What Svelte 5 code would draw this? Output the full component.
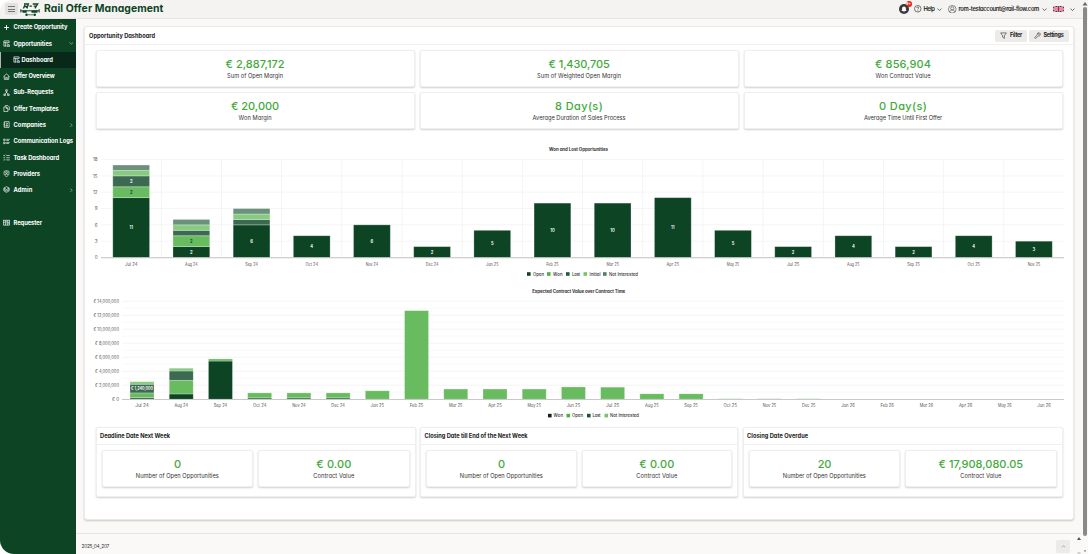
<script>
  const nav = [
    { icon: 'plus', label: 'Create Opportunity', w: 54 },
    { icon: 'board', label: 'Opportunities', w: 38.5, chevron: 'down' },
    { icon: 'board', label: 'Dashboard', w: 31.5, active: true },
    { icon: 'home', label: 'Offer Overview', w: 41 },
    { icon: 'tree', label: 'Sub-Requests', w: 40 },
    { icon: 'copy', label: 'Offer Templates', w: 45 },
    { icon: 'book', label: 'Companies', w: 32.5, chevron: 'right' },
    { icon: 'logs', label: 'Communication Logs', w: 59.5 },
    { icon: 'tasks', label: 'Task Dashboard', w: 45.5 },
    { icon: 'shield', label: 'Providers', w: 26.5 },
    { icon: 'layers', label: 'Admin', w: 19, chevron: 'right' },
    null,
    { icon: 'request', label: 'Requester', w: 28.5 }
  ];

  const stats = [
    { value: '€ 2,887,172', w: 59, label: 'Sum of Open Margin', lw: 56 },
    { value: '€ 1,430,705', w: 61, label: 'Sum of Weighted Open Margin', lw: 84 },
    { value: '€ 856,904', w: 56, label: 'Won Contract Value', lw: 55 },
    { value: '€ 20,000', w: 48, label: 'Won Margin', lw: 33 },
    { value: '8 Day(s)', w: 48, label: 'Average Duration of Sales Process', lw: 93 },
    { value: '0 Day(s)', w: 48, label: 'Average Time Until First Offer', lw: 78 }
  ];

  const panels = [
    { title: 'Deadline Date Next Week', w: 70, count: '0', cw: 6.5, value: '€ 0.00', vw: 35 },
    { title: 'Closing Date till End of the Next Week', w: 103, count: '0', cw: 6.5, value: '€ 0.00', vw: 35 },
    { title: 'Closing Date Overdue', w: 61, count: '20', cw: 13, value: '€ 17,908,080.05', vw: 84.5 }
  ];

  const DARK = '#0d4424', GREEN = '#68bc5f', MID = '#3c6a50', LIGHT = '#86cb7f', GREY = '#6b907c';

  const opp = [
    ['Jul 24', [11, 2, 2, 1, 1]], ['Aug 24', [2, 2, 1, 1, 1]], ['Sep 24', [6, 0, 1, 1, 1]],
    ['Oct 24', [4]], ['Nov 24', [6]], ['Dec 24', [2]], ['Jan 25', [5]], ['Feb 25', [10]],
    ['Mar 25', [10]], ['Apr 25', [11]], ['May 25', [5]], ['Jul 25', [2]], ['Aug 25', [4]],
    ['Sep 25', [2]], ['Oct 25', [4]], ['Nov 25', [3]]
  ];
  const oppColors = [DARK, GREEN, MID, LIGHT, GREY];

  // Segments run bottom to top as [color, millions].
  const contract = [
    ['Jul 24', [[MID, 0.25], [GREEN, 0.65], [MID, 1.24], [LIGHT, 0.36]]],
    ['Aug 24', [[DARK, 0.75], [GREEN, 1.95], [MID, 1.33], [LIGHT, 0.4]]],
    ['Sep 24', [[DARK, 5.45], [GREEN, 0.3]]],
    ['Oct 24', [[MID, 0.2], [GREEN, 0.7]]], ['Nov 24', [[MID, 0.2], [GREEN, 0.7]]],
    ['Dec 24', [[MID, 0.2], [GREEN, 0.7]]], ['Jan 25', [[GREEN, 1.2]]],
    ['Feb 25', [[GREEN, 12.65]]], ['Mar 25', [[GREEN, 1.45]]], ['Apr 25', [[GREEN, 1.45]]],
    ['May 25', [[GREEN, 1.45]]], ['Jun 25', [[GREEN, 1.75]]], ['Jul 25', [[GREEN, 1.72]]],
    ['Aug 25', [[GREEN, 0.77]]], ['Sep 25', [[GREEN, 0.77]]],
    ['Oct 25', [['#c5e5c2', 0.12]]], ['Nov 25', [['#c5e5c2', 0.12]]], ['Dec 25', [['#c5e5c2', 0.12]]],
    ['Jan 26', []], ['Feb 26', []], ['Mar 26', []], ['Apr 26', []], ['May 26', []], ['Jun 26', []]
  ];

  function stack(list, unit, base) {
    let y = base;
    return list.filter(([, v]) => v > 0).map(([color, v]) => {
      y -= v * unit;
      return { color, v, y, h: v * unit };
    });
  }

  const bars1 = opp.map(([label, vals], i) => ({
    label, x: 101.1 + 60.18 * (i + 0.5),
    segs: stack(vals.map((v, k) => [oppColors[k], v]), 5.44, 257.5)
  }));
  const bars2 = contract.map(([label, vals], i) => ({
    label, x: 122.4 + 39.22 * (i + 0.5), segs: stack(vals, 7, 399.2)
  }));
  const money = (n) => (n === 0 ? '€ 0' : `€ ${n},000,000`);

  const legend1 = [
    { x: 527, c: DARK, t: 'Open', w: 11 }, { x: 547, c: '#4fae46', t: 'Won', w: 9.5 },
    { x: 566, c: '#245a3b', t: 'Lost', w: 8 }, { x: 583.5, c: '#75c46c', t: 'Initial', w: 11 },
    { x: 603, c: '#527e67', t: 'Not Interested', w: 29 }
  ];
  const legend2 = [
    { x: 548, c: '#08291a', t: 'Won', w: 9.5 }, { x: 566.5, c: '#4fae46', t: 'Open', w: 11 },
    { x: 587, c: '#1d5436', t: 'Lost', w: 8 }, { x: 604.5, c: '#75c46c', t: 'Not Interested', w: 29 }
  ];

  // Tracks a single-line label so that it fills the width it is given.
  function fit(node, width) {
    const apply = () => {
      node.style.letterSpacing = '0px';
      const gap = (width - node.getBoundingClientRect().width) / node.textContent.length;
      node.style.letterSpacing = `${gap}px`;
    };
    apply();
    document.fonts.ready.then(apply);
  }
</script>

{#snippet icon(name)}
  <svg class="ico" viewBox="0 0 16 16" fill="none" stroke="currentColor" stroke-width="1.5">
    {#if name === 'plus'}
      <path d="M8 2.5v11M2.5 8h11" stroke-width="2.2" />
    {:else if name === 'board'}
      <path d="M14 6V2H2v12h5M2 5.5h12M5.5 5.5V14M8 8.5h3M9 14.5h6v-3H9zM12 11.5V9" />
    {:else if name === 'home'}
      <path d="M1 8.5 8 2l7 6.5M3 7v7.5h10V7M6.3 14v-4h3.4v4" />
    {:else if name === 'tree'}
      <path d="M6.3 1.5h3.4v4H6.3zM8 5.5V9M4 11.5 8 8l4 3.500M2 11.500h3.500V15H2zM10.500 11.500H14V15h-3.500z" />
    {:else if name === 'copy'}
      <path d="M5 4V1.500h6.500L14.500 4.500V11H12M2 4.500h6L11 7.500V15H2zM7.500 4.500V8H11" />
    {:else if name === 'book'}
      <path d="M3 1.500h11v13H3zM1.500 4.500H4M1.500 8H4M1.500 11.500H4M6.500 11.500c0-3 4.500-3 4.500 0z" /><circle cx="8.750" cy="6" r="1.500" />
    {:else if name === 'logs'}
      <path d="M1.500 2.500h3.500v3H1.500zM1.500 9.500h3.500v3.500H1.500zM7.500 3h8M7.500 5.500h6M7.500 10h8M7.500 12.500h6" />
    {:else if name === 'tasks'}
      <path d="m1 3 1.500 1.500L5 1.500M1 8l1.500 1.500L5 6.500M1 13l1.500 1.500L5 11.500M7.500 3.500h8M7.500 8.500h8M7.500 13.500h8" />
    {:else if name === 'shield'}
      <path d="M2.500 3 8 1.500 13.500 3v5.500c0 3-2.500 5-5.500 6.500-3-1.500-5.500-3.500-5.500-6.500z" /><circle cx="8" cy="6" r="2" /><path d="M4.500 11.500c1-3 6-3 7 0" />
    {:else if name === 'layers'}
      <path d="m8 1.500 6 3.200-6 3.300-6-3.300zM2 8l6 3.300L14 8M2 11.200l6 3.300 6-3.300M2 4.700v6.500M14 4.700v6.500" />
    {:else if name === 'request'}
      <path d="M0 3h16M1 3v11h14V3M5.500 3v11M10.500 3v11M1 7.500h4.500M10.500 7.500H15M7 6h2M7 9h2M12 10.500h2" />
    {/if}
  </svg>
{/snippet}

{#snippet chevron(dir)}
  <svg class="chev" viewBox="0 0 8 8" fill="none" stroke="currentColor">
    {#if dir === 'right'}<path d="m2.500 1 3 3-3 3" />{:else if dir === 'up'}<path d="m1.200 5.200 2.800-2.500 2.800 2.500" />{:else}<path d="m.8 2.600 3.200 3 3.200-3" />{/if}
  </svg>
{/snippet}

<div class="window">
  <header>
    <button class="burger" aria-label="Menu"><i></i><i></i><i></i></button>
    <svg class="logo" viewBox="0 0 20 14" fill="none" stroke="#0d4424">
      <path d="M4 1h4.400L7.600 3.500H4.600M4.900 2 3.400 5.400M6 3.500l1.600 1.900M9.500 3.200h2.400M12.700 1h5L14.900 5.400M13.600 3.200h3.200" stroke-width="1.300" />
      <path d="M.8 6.200v3.300M19.200 6.200v3.300M1 7.800h18" stroke-width="1" />
      <path d="M2.500 7.400h4.200v2.400H2.500zM11.500 7.400h6v2.400h-6z" fill="#0d4424" stroke="none" />
      <circle cx="6.500" cy="11.800" r="1.200" fill="#0d4424" stroke="none" /><circle cx="14.800" cy="11.800" r="1.200" fill="#0d4424" stroke="none" />
      <path d="M6 11.800h9" stroke-width=".7" />
    </svg>
    <h1><span use:fit={119.5}>Rail Offer Management</span></h1>
    <div class="tools">
      <div class="bell">
        <svg viewBox="0 0 10 10"><circle cx="5" cy="5" r="5" fill="#37393c" /><path d="M2.500 7h5L6.900 5.800V4.300a1.900 1.900 0 0 0-3.800 0v1.500zM4.200 7.400h1.600a.8.800 0 0 1-1.600 0z" fill="#fff" /></svg>
        <b>9+</b>
      </div>
      <svg class="round" viewBox="0 0 16 16" fill="none" stroke="#333" stroke-width="1.400"><circle cx="8" cy="8" r="7" /><path d="M5.900 6.200c0-2.800 4.200-2.600 4.200 0 0 1.700-2.100 1.600-2.100 3.200M8 11v1.400" /></svg>
      <span use:fit={11}>Help</span>
      {@render chevron('down')}
      <svg class="round user" viewBox="0 0 16 16" fill="none" stroke="#444" stroke-width="1.100"><circle cx="8" cy="8" r="7.200" /><circle cx="8" cy="6.300" r="3" /><path d="M3 13c1-3 2.500-3.700 5-3.700s4 .7 5 3.700" /></svg>
      <span use:fit={80.5}>rom-testaccount@rail-flow.com</span>
      {@render chevron('down')}
      <svg class="flag" viewBox="0 0 22 12"><path fill="#29337e" d="M0 0h22v12H0z" /><path stroke="#fff" stroke-width="2.600" d="m0 0 22 12M22 0 0 12" /><path stroke="#d22" stroke-width="1" d="m0 0 22 12M22 0 0 12" /><path stroke="#fff" stroke-width="4" d="M11 0v12M0 6h22" /><path stroke="#d3172f" stroke-width="2.400" d="M11 0v12M0 6h22" /></svg>
      {@render chevron('down')}
    </div>
  </header>

  <div class="body">
    <nav>
      {#each nav as item}
        {#if item}
          <a class:active={item.active}>
            {@render icon(item.icon)}
            <span use:fit={item.w}>{item.label}</span>
            {#if item.chevron}<em>{@render chevron(item.chevron)}</em>{/if}
          </a>
        {:else}
          <div class="gap"></div>
        {/if}
      {/each}
    </nav>

    <main>
      <section class="dash">
        <div class="head">
          <h2><span use:fit={66}>Opportunity Dashboard</span></h2>
          <button class="filter"><svg viewBox="0 0 16 16" fill="none" stroke="#333" stroke-width="1.400"><path d="M1.500 2h13L10 8.500v6L6 12V8.500z" /></svg><span use:fit={12}>Filter</span></button>
          <button class="settings"><svg viewBox="0 0 16 16" fill="none" stroke="#333" stroke-width="1.400"><path d="M13.800 3.500 11.500 5.800 10 4.500l2.300-2.500C9.500.8 6.500 3 7.500 6.500L2 12c-1.200 1.500.8 3.500 2.300 2.300L9.800 8.800c3.500 1 5.700-2.300 4-5.300z" /></svg><span use:fit={20}>Settings</span></button>
        </div>

        <div class="stats">
          {#each stats as s}
            <div class="card">
              <strong><span use:fit={s.w}>{s.value}</span></strong>
              <small><span use:fit={s.lw}>{s.label}</span></small>
            </div>
          {/each}
        </div>

        <svg class="chart" viewBox="86 140 984 287">
          <text class="title" x="578.500" y="150.900" textLength="59">Won and Lost Opportunities</text>
          {#each [0, 3, 6, 9, 12, 15, 18] as n}
            <path d="M101 {257.5 - n * 5.44}H1064" stroke={n ? '#f4f5f5' : '#cfcfcf'} />
            <text class="axis end" x="97.500" y={259.2 - n * 5.44}>{n}</text>
          {/each}
          {#each bars1 as b, i}
            {#if i}<path d="M{b.x - 30.09} 159.500V257" stroke="#f3f4f5" />{/if}
            {#each b.segs as s}
              <rect x={b.x - 18.4} y={s.y} width="36.800" height={s.h} fill={s.color} stroke="#fff" stroke-opacity=".35" stroke-width=".8" />
              {#if s.v > 1}<text class="val" class:dark={s.color === GREEN} x={b.x} y={s.y + s.h / 2 + 1.5}>{s.v}</text>{/if}
            {/each}
            <text class="axis" x={b.x} y="265.700" textLength="12.500" lengthAdjust="spacingAndGlyphs">{b.label}</text>
          {/each}
          <path d="M101 257.900H1064" stroke="#cfcfcf" stroke-width=".8" />
          {#each legend1 as l}
            <rect x={l.x} y="272.200" width="3.600" height="3.600" fill={l.c} />
            <text class="leg" x={l.x + 6} y="275.700" textLength={l.w}>{l.t}</text>
          {/each}

          <text class="title" x="578.700" y="292.700" textLength="93">Expected Contract Value over Contract Time</text>
          {#each Array(14) as _, i}
            <path d="M122 {392.2 - i * 7}H1064" stroke={i % 2 ? '#f3f4f4' : '#f9f9f9'} />
          {/each}
          {#each [0, 2, 4, 6, 8, 10, 12, 14] as n}
            <text class="axis end" x="119" y={400.900 - n * 7} textLength={n === 0 ? 7 : n < 10 ? 24 : 25.500} lengthAdjust="spacingAndGlyphs">{money(n)}</text>
          {/each}
          {#each bars2 as b}
            {#each b.segs as s}
              <rect x={b.x - 12} y={s.y} width="24" height={s.h} fill={s.color} stroke="#fff" stroke-opacity=".35" stroke-width=".7" />
              {#if s.v === 1.24}<text class="val" x={b.x} y={s.y + s.h / 2 + 1.5} textLength="22" lengthAdjust="spacingAndGlyphs">€ 1,240,000</text>{/if}
            {/each}
            <text class="axis" x={b.x} y="407.200" textLength="13.500" lengthAdjust="spacingAndGlyphs">{b.label}</text>
          {/each}
          <path d="M122 399.500H1064" stroke="#c8c8c8" />
          {#each legend2 as l}
            <rect x={l.x} y="413.800" width="3.600" height="3.600" fill={l.c} />
            <text class="leg" x={l.x + 5.500} y="417.200" textLength={l.w}>{l.t}</text>
          {/each}
        </svg>

        <div class="panels">
          {#each panels as p}
            <div class="panel">
              <h3><span use:fit={p.w}>{p.title}</span></h3>
              <div class="pair">
                <div class="card"><strong><span use:fit={p.cw}>{p.count}</span></strong><small><span use:fit={83}>Number of Open Opportunities</span></small></div>
                <div class="card"><strong><span use:fit={p.vw}>{p.value}</span></strong><small><span use:fit={41}>Contract Value</span></small></div>
              </div>
            </div>
          {/each}
        </div>
      </section>

      <footer>
        <span use:fit={27.5}>2025_04_207</span>
        <button aria-label="Back to top">{@render chevron('up')}</button>
      </footer>
    </main>

    <div class="scroll">
      <i class="thumb"></i>
      <svg class="up" viewBox="0 0 6 4"><path d="M3 0 5.500 3.500h-5z" fill="#666" /></svg>
      <svg class="low" viewBox="0 0 12 18"><path d="m4 1 2 3H2zM10 16l-1.200-1.500h2.400z" fill="#555" /><path d="M2.500 17h3" stroke="#aaa" /></svg>
    </div>
  </div>
</div>

<style>
  :global(body) { background: #fff; overflow: hidden; }
  * { box-sizing: border-box; }
  .window {
    width: 1088px; height: 554px; display: flex; flex-direction: column; overflow: hidden;
    border-radius: 12px 0 0 14px; background: #faf9f8; color: #1c1c1c;
    font-family: Inter, "Liberation Sans", sans-serif; font-feature-settings: "cv11";
    font-size: 5.800px; line-height: 1; white-space: nowrap;
  }
  h1, h2, h3 { margin: 0; font-size: inherit; }
  span { display: inline-block; }
  svg { display: block; flex: none; }
  button { border: 0; padding: 0; background: #ecebea; font: inherit; color: inherit; display: flex; align-items: center; }
  header { height: 19px; flex: none; display: flex; align-items: center; background: #f4f3f2; border-bottom: 1px solid #e6e5e3; padding-left: 5px; }
  .burger { width: 13px; height: 12px; flex-direction: column; justify-content: center; gap: 1.500px; background: #e3e2e0; border-radius: 2px; }
  .burger i { width: 7px; height: 1px; background: #777; }
  .logo { width: 20px; height: 14px; margin: 1px 0 0 2px; }
  h1 { font-size: 10.400px; font-weight: 700; color: #0d4424; margin-left: 4px; line-height: 18px; }
  .tools { display: flex; align-items: center; margin: 0 13px 0 auto; height: 17px; font-weight: 600; }
  .bell { width: 10px; height: 10px; margin-right: 5px; position: relative; }
  .bell svg { width: 10px; height: 10px; }
  .bell b { position: absolute; left: 6.500px; top: -3px; width: 6px; height: 6px; border-radius: 50%; background: #e2231a; color: #fff; font-size: 3.500px; line-height: 6px; text-align: center; }
  .round { width: 7.500px; height: 7.500px; margin-right: 2px; }
  .user { width: 8.500px; height: 8.500px; margin-left: 6px; }
  .chev { width: 5px; height: 5px; }
  .tools .chev { margin-left: 2.500px; }
  .flag { width: 11px; height: 6px; margin: 0 4px 0 6px; }
  .body { flex: 1; min-height: 0; display: flex; }
  nav { width: 76px; flex: none; background: #0d4424; color: #fff; font-weight: 700; padding-top: .200px; }
  nav a { height: 16.280px; display: flex; align-items: center; padding-left: 3px; gap: 3.500px; }
  nav .active { background: #08291a; border-left: 1px solid #a7b8ae; padding-left: 11.500px; gap: 2px; }
  nav em { margin: 0 3px 0 auto; }
  nav .chev { width: 4.500px; height: 4.500px; opacity: .8; }
  .ico { width: 7px; height: 7px; }
  .gap { height: 16.280px; }
  main { width: 1005px; flex: none; padding: 7px 0 0 8px; display: flex; flex-direction: column; }
  .dash { width: 989.500px; height: 494px; flex: none; background: #fff; border: 1px solid #eceae8; border-radius: 3px; box-shadow: 0 1px 2px #0003; display: flex; flex-direction: column; }
  .head { height: 18px; flex: none; display: flex; align-items: center; border-bottom: 1px solid #f0f0f0; padding: 0 4px 0 4px; }
  h2, h3 { font-weight: 700; font-size: 5.700px; }
  .head h2 { margin-right: auto; }
  .head button { height: 12px; border-radius: 1.500px; gap: 3px; font-weight: 700; font-size: 5.500px; }
  .head button svg { width: 7px; height: 7px; }
  .filter { width: 32px; padding-left: 5.500px; margin-right: 2px; }
  .settings { width: 40px; padding-left: 5px; }
  .stats { display: grid; grid-template-columns: repeat(3, 319px); column-gap: 5px; row-gap: 5px; padding: 5px 0 0 10.600px; flex: none; }
  .card { height: 37px; background: #fff; border: 1px solid #efefef; border-radius: 2px; box-shadow: 0 1px 2px #00000030; display: flex; flex-direction: column; align-items: center; padding-top: 6px; }
  .card strong { font-size: 11px; font-weight: 500; line-height: 14px; color: #3fa93b; }
  .card small { font-size: 5.700px; line-height: 8px; color: #333; margin-top: 1.400px; }
  .chart { width: 984px; height: 287px; margin: 11px 0 0 1px; }
  text { text-anchor: middle; }
  .title { font-size: 4.400px; font-weight: 700; fill: #333; }
  .axis { font-size: 4.500px; fill: #555; }
  .end { text-anchor: end; }
  .val { font-size: 4.200px; font-weight: 600; fill: #fff; }
  .val.dark { fill: #134; }
  .leg { font-size: 4.300px; font-weight: 500; fill: #333; text-anchor: start; }
  .panels { display: grid; grid-template-columns: 320px 318px 320px; column-gap: 4.500px; padding-left: 10.600px; flex: none; }
  .panel { height: 70px; background: #fff; border: 1px solid #efefef; border-radius: 2px; box-shadow: 0 1px 2px #00000030; }
  h3 { height: 17px; line-height: 16px; padding-left: 3.500px; border-bottom: 1px solid #f0f0f0; }
  .pair { display: grid; grid-template-columns: 1fr 1fr; gap: 5px; padding: 5px 5px 0; }
  footer { height: 21px; margin: auto 0 0 -8px; border-top: 1px solid #e6e5e3; display: flex; align-items: center; justify-content: space-between; padding: 4px 11px 0 5.500px; font-size: 4.800px; color: #333; }
  footer button { width: 14px; height: 13px; border-radius: 2px; justify-content: center; color: #888; }
  .scroll { width: 7px; flex: none; position: relative; }
  .thumb { position: absolute; left: 2px; top: -12px; width: 4px; height: 529px; border-radius: 2px; background: #898989; }
  .up { position: absolute; left: 1px; top: -17px; width: 6px; height: 4px; }
  .low { position: absolute; left: -6px; top: 517px; width: 12px; height: 18px; }
</style>
